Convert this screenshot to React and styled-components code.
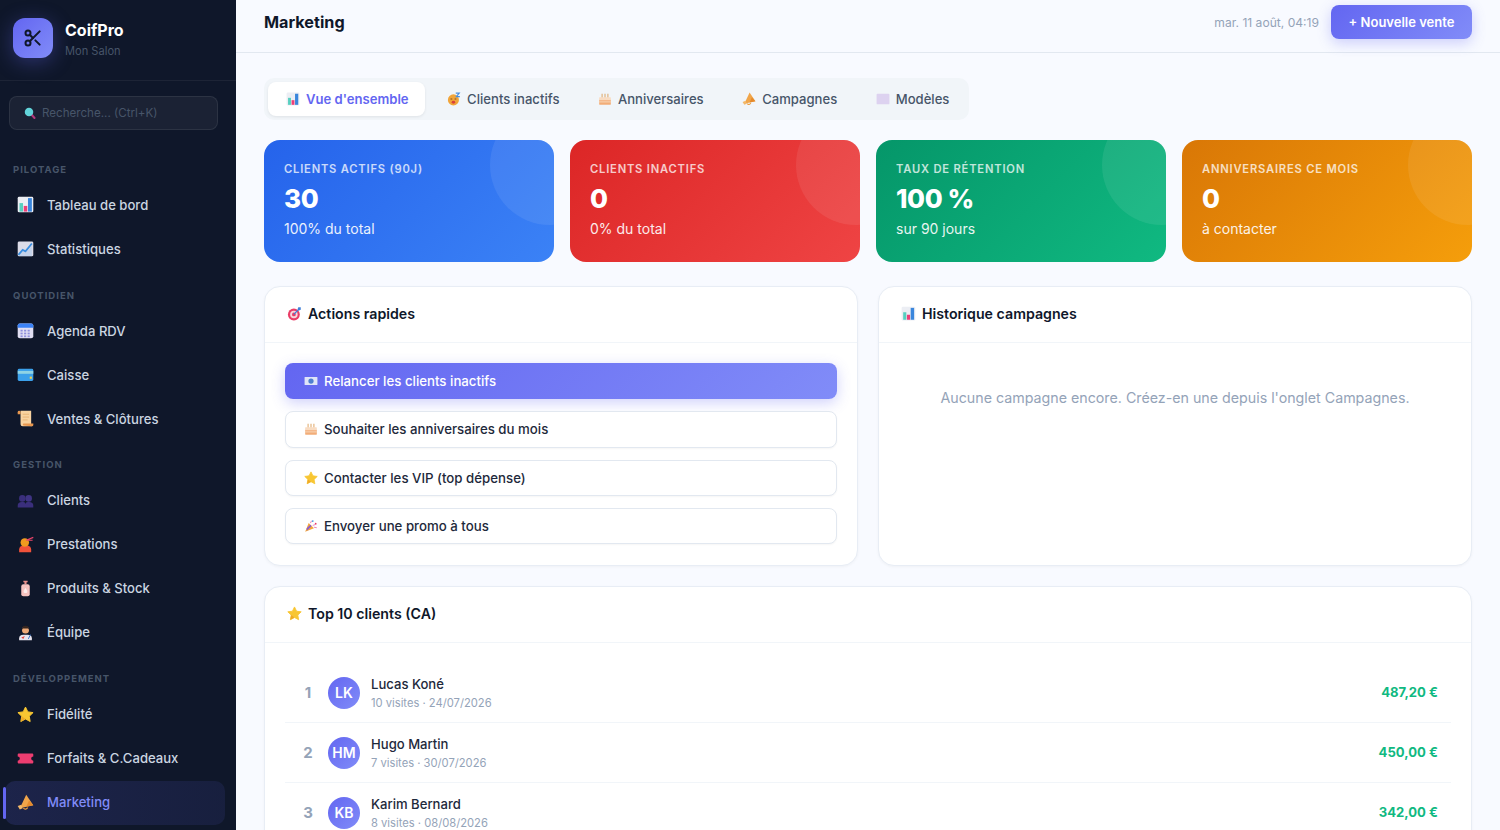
import React from "react";
import styled, { createGlobalStyle } from "styled-components";
import { Scissors } from "lucide-react";

const GlobalStyle = createGlobalStyle`
  * { box-sizing: border-box; }
  html, body { margin: 0; height: 100%; overflow: hidden; }
  body {
    font-family: Inter, "Noto Sans", sans-serif;
    background: #f8faff;
    color: #0f172a;
  }
`;

const Layout = styled.div`
  display: flex;
  width: 1500px;
  height: 830px;
  overflow: hidden;
`;

const Sidebar = styled.aside`
  width: 236px;
  flex-shrink: 0;
  height: 830px;
  overflow: hidden;
  background: #0f172a;
`;
const Brand = styled.div`
  height: 81px;
  display: flex;
  align-items: center;
  gap: 12px;
  padding: 0 13px 4px;
  border-bottom: 1px solid rgba(255, 255, 255, 0.06);
`;
const LogoBox = styled.div`
  width: 40px;
  height: 40px;
  border-radius: 12px;
  background: linear-gradient(135deg, #6366f1, #818cf8);
  box-shadow: 0 4px 20px rgba(99, 102, 241, 0.35);
  display: flex;
  align-items: center;
  justify-content: center;
  color: #0f172a;
`;
const BrandText = styled.div`
  margin-top: 3px;
`;
const BrandName = styled.div`
  font-size: 16px;
  font-weight: 700;
  line-height: 20px;
  color: #fff;
`;
const BrandSub = styled.div`
  font-size: 11.1px;
  line-height: 16px;
  margin-top: 3px;
  color: #475569;
`;
const SearchWrap = styled.div`
  padding: 15px 18px 16px 9px;
`;
const Search = styled.div`
  height: 34px;
  border-radius: 8px;
  background: rgba(255, 255, 255, 0.05);
  border: 1px solid rgba(255, 255, 255, 0.08);
  display: flex;
  align-items: center;
  gap: 6px;
  padding: 0 14px 1px;
  font-size: 11.6px;
  color: #475569;
`;
const EmojiSvg = styled.svg`
  width: ${(p) => p.$size}px;
  height: ${(p) => p.$size}px;
  flex-shrink: 0;
`;
const NavSection = styled.div`
  padding: 0 11px 0 5px;
`;
const NavLabel = styled.div`
  font-size: 9.5px;
  font-weight: 700;
  letter-spacing: 1px;
  line-height: 13px;
  padding: 16.8px 0 8px 8px;
  color: #475569;
  text-transform: uppercase;
`;
const NavItem = styled.div`
  position: relative;
  height: 44px;
  display: flex;
  align-items: center;
  gap: 13px;
  padding: 0 0 2px 12px;
  border-radius: 10px;
  font-size: 13.1px;
  font-weight: 500;
  color: ${(p) => (p.$active ? "#818cf8" : "#cbd5e1")};
  background: ${(p) =>
    p.$active
      ? "linear-gradient(90deg, rgba(99, 102, 241, 0.16), rgba(99, 102, 241, 0.1))"
      : "transparent"};
  ${(p) =>
    p.$active &&
    `&::before {
      content: "";
      position: absolute;
      left: -2px;
      top: 6px;
      bottom: 6px;
      width: 3px;
      border-radius: 2px;
      background: #6366f1;
    }`}
`;

const Main = styled.main`
  flex: 1;
  min-width: 0;
  height: 830px;
  overflow: hidden;
`;
const Header = styled.header`
  height: 53px;
  display: flex;
  align-items: center;
  justify-content: space-between;
  padding: 0 28px;
  border-bottom: 1px solid #e2e8f0;
`;
const PageTitle = styled.h1`
  margin: 0 0 8px;
  font-size: 16.2px;
  font-weight: 700;
`;
const HeaderRight = styled.div`
  display: flex;
  align-items: center;
  gap: 12px;
  margin-top: -8px;
`;
const DateText = styled.span`
  font-size: 12.1px;
  color: #94a3b8;
`;
const PrimaryButton = styled.button`
  height: 34px;
  width: 141px;
  border: none;
  border-radius: 8px;
  font: 600 13px Inter, sans-serif;
  color: #fff;
  background: linear-gradient(135deg, #6366f1, #818cf8);
  box-shadow: 0 4px 14px rgba(99, 102, 241, 0.3);
`;
const Content = styled.div`
  padding: 25px 28px;
  display: flex;
  flex-direction: column;
`;
const Tabs = styled.div`
  align-self: flex-start;
  display: flex;
  gap: 4.5px;
  padding: 4px;
  border-radius: 10px;
  background: #f1f5f9;
  margin-bottom: 20px;
`;
const Tab = styled.div`
  height: 34px;
  display: flex;
  align-items: center;
  gap: 6px;
  padding: 0 16px 0 18px;
  border-radius: 8px;
  font-size: 13.1px;
  font-weight: ${(p) => (p.$active ? 600 : 500)};
  color: ${(p) => (p.$active ? "#6366f1" : "#475569")};
  background: ${(p) => (p.$active ? "#fff" : "transparent")};
  box-shadow: ${(p) => (p.$active ? "0 1px 3px rgba(0,0,0,0.08)" : "none")};
`;
const KpiGrid = styled.div`
  display: grid;
  grid-template-columns: repeat(4, 1fr);
  gap: 16px;
  margin-bottom: 24px;
`;
const Kpi = styled.div`
  position: relative;
  overflow: hidden;
  height: 122px;
  padding: 22px 20px;
  border-radius: 16px;
  color: #fff;
  background: linear-gradient(135deg, ${(p) => p.$from}, ${(p) => p.$to});
  &::after {
    content: "";
    position: absolute;
    top: -35px;
    right: -56px;
    width: 120px;
    height: 120px;
    border-radius: 50%;
    background: rgba(255, 255, 255, 0.08);
  }
`;
const KpiLabel = styled.div`
  font-size: 11.2px;
  font-weight: 600;
  line-height: 14px;
  letter-spacing: 0.8px;
  text-transform: uppercase;
  opacity: 0.75;
`;
const KpiValue = styled.div`
  font-size: 26px;
  font-weight: 800;
  line-height: 34px;
  letter-spacing: -0.4px;
  margin-top: 6px;
`;
const KpiSub = styled.div`
  font-size: 14px;
  line-height: 18px;
  margin-top: 4px;
  opacity: 0.9;
`;
const TwoCols = styled.div`
  display: grid;
  grid-template-columns: 1fr 1fr;
  gap: 20px;
  margin-bottom: 20px;
`;
const Panel = styled.section`
  background: #fff;
  border: 1px solid #e8edf5;
  border-radius: 16px;
  box-shadow: 0 1px 3px rgba(0, 0, 0, 0.04);
`;
const PanelHeader = styled.div`
  height: 56px;
  display: flex;
  align-items: center;
  gap: 6px;
  padding: 0 22px 2px;
  border-bottom: 1px solid #f1f5f9;
  font-size: 14.2px;
  font-weight: 600;
`;
const PanelBody = styled.div`
  padding: 20px;
  display: flex;
  flex-direction: column;
  gap: 12px;
`;
const ActionButton = styled.button`
  height: 36.3px;
  display: flex;
  align-items: center;
  gap: 6px;
  padding: 0 18px;
  border-radius: 8px;
  font: 500 13.25px Inter, sans-serif;
  text-align: left;
  color: ${(p) => (p.$primary ? "#fff" : "#1e293b")};
  border: 1px solid ${(p) => (p.$primary ? "transparent" : "#e2e8f0")};
  background: ${(p) =>
    p.$primary ? "linear-gradient(135deg, #6366f1, #818cf8) border-box" : "#fff"};
  box-shadow: ${(p) =>
    p.$primary ? "0 4px 14px rgba(99, 102, 241, 0.3)" : "0 1px 2px rgba(0,0,0,0.04)"};
`;
const EmptyText = styled.div`
  padding: 46px 0 0;
  height: 222px;
  text-align: center;
  font-size: 14.24px;
  line-height: 18px;
  color: #94a3b8;
`;
const RowList = styled.div`
  padding: 20px;
`;
const ClientRow = styled.div`
  height: 60px;
  display: flex;
  align-items: center;
  padding: 0 13px 0 12px;
  border-bottom: 1px solid #f1f5f9;
`;
const Rank = styled.div`
  width: 22px;
  text-align: center;
  margin-right: 9px;
  font-size: 15px;
  font-weight: 700;
  color: #94a3b8;
`;
const Avatar = styled.div`
  width: 32px;
  height: 32px;
  border-radius: 50%;
  margin-right: 11px;
  display: flex;
  align-items: center;
  justify-content: center;
  font-size: 14px;
  font-weight: 600;
  color: #fff;
  background: linear-gradient(135deg, #6366f1, #818cf8);
`;
const ClientInfo = styled.div`
  flex: 1;
`;
const ClientName = styled.div`
  font-size: 13.1px;
  font-weight: 500;
  line-height: 18px;
  color: #1e293b;
`;
const ClientMeta = styled.div`
  font-size: 11.2px;
  line-height: 16px;
  margin-top: 2px;
  color: #94a3b8;
`;
const Amount = styled.div`
  font-size: 13.1px;
  font-weight: 700;
  padding-bottom: 1px;
  color: #10b981;
`;

// hand drawn versions of the emoji used in the app
const GLYPHS = {
  chart: (
    <>
      <rect x="1" y="1" width="22" height="22" rx="2" fill="#eceef4" />
      <rect x="3.5" y="10" width="5" height="12" fill="#57d0c0" />
      <rect x="9.5" y="14" width="5" height="8" fill="#ee3f78" />
      <rect x="15.5" y="3" width="5.5" height="19" fill="#3a86dc" />
    </>
  ),
  trend: (
    <>
      <rect x="1" y="2" width="22" height="21" rx="2" fill="#dcdce8" />
      <path d="M2 21 L8 14 L12 16 L21 5" fill="none" stroke="#3a8ee0" strokeWidth="2.6" />
      <path d="M2 23 L8 16 L12 18 L21 8 V23 Z" fill="#9fc4ea" opacity="0.4" />
    </>
  ),
  calendar: (
    <>
      <rect x="1" y="2" width="22" height="21" rx="3" fill="#e0def2" />
      <path d="M1 8 V5 a3 3 0 0 1 3-3 h16 a3 3 0 0 1 3 3 V8 Z" fill="#3b82f6" />
      {[5, 10, 15].flatMap((x) =>
        [11, 15, 19].map((y) => (
          <rect key={`${x}-${y}`} x={x} y={y} width="3" height="2.4" fill="#8d8edb" />
        ))
      )}
    </>
  ),
  card: (
    <>
      <rect x="1" y="4" width="22" height="17" rx="2" fill="#3ba0ea" />
      <rect x="1" y="7" width="22" height="4" fill="#8fd3e4" />
      <rect x="18" y="15" width="3" height="3" fill="#f3d44a" />
    </>
  ),
  scroll: (
    <>
      <path d="M5 1 H20 V21 a2 2 0 0 0 2 2 H8 a3 3 0 0 1-3-3 Z" fill="#f9d3a0" />
      <path d="M1 3 a2 2 0 0 1 4 0 V6 H1 Z" fill="#e8974f" />
      <path d="M9 22 a2 2 0 0 1 0-3 H23 V21 a2 2 0 0 1-2 2 Z" fill="#e8974f" />
      <path d="M8 6 H17 M8 10 H17 M8 14 H15" stroke="#e5b06e" strokeWidth="1.2" />
    </>
  ),
  people: (
    <>
      <circle cx="7.5" cy="9" r="4.6" fill="#3a2f7c" />
      <circle cx="16.5" cy="9" r="4.6" fill="#3f3484" />
      <path d="M1 22 v-3 a6 5 0 0 1 6-5 h2 a3 3 0 0 1 3 3 a3 3 0 0 1 3-3 h2 a6 5 0 0 1 6 5 v3 Z" fill="#3a2f7c" />
    </>
  ),
  hairdresser: (
    <>
      <path d="M3 23 v-4 a7 6 0 0 1 7-6 h3 a7 6 0 0 1 7 6 v4 Z" fill="#f0523a" />
      <circle cx="11" cy="9" r="6" fill="#f09b1e" />
      <path d="M13 6 L23 2 M13 6 L22 6" stroke="#e8456a" strokeWidth="1.7" />
    </>
  ),
  bottle: (
    <>
      <path d="M9 1 H15 V3 H13.5 V6 H10.5 V3 H9 Z" fill="#e88f8a" />
      <rect x="6" y="6" width="12" height="17" rx="3" fill="#f7c3c0" />
      <path d="M12 11 l2.5 4 a2.6 2.6 0 1 1-5 0 Z" fill="#fff" opacity="0.7" />
    </>
  ),
  artist: (
    <>
      <path d="M3 23 v-3 a6 5 0 0 1 6-5 h6 a6 5 0 0 1 6 5 v3 Z" fill="#e7e4ee" />
      <circle cx="12" cy="8.5" r="5" fill="#eeaa78" />
      <path d="M7 8 a5 5.5 0 0 1 10 0 l-1.5-1.5 h-7 Z" fill="#35251f" />
      <path d="M6 19 l5 -2 l-2 4 Z" fill="#e6453c" />
      <path d="M16 21 l3-6" stroke="#3f78c8" strokeWidth="1.4" />
    </>
  ),
  star: (
    <>
      <path
        d="M12 1.5 l3.3 6.8 l7.4 1 l-5.4 5.2 l1.3 7.4 L12 18.4 l-6.6 3.5 l1.3-7.4 L1.3 9.3 l7.4-1 Z"
        fill="#f8c632"
        stroke="#f8c632"
        strokeWidth="1.4"
        strokeLinejoin="round"
      />
      <path d="M12 18.4 l-6.6 3.5 l1.3-7.4 Z" fill="#efa928" />
    </>
  ),
  ticket: (
    <path
      d="M2 5 H22 a1.5 1.5 0 0 1 1 1.5 v2.5 a3 3 0 0 0 0 6 v2.5 a1.5 1.5 0 0 1-1 1.5 H2 a1.5 1.5 0 0 1-1-1.5 V15 a3 3 0 0 0 0-6 V6.5 A1.5 1.5 0 0 1 2 5 Z"
      fill="#ec3d70"
    />
  ),
  megaphone: (
    <>
      <path d="M13 1 L23 16 L4 20 Z" fill="#f0a54a" />
      <path d="M17 9 L23 16 L13 18 Z" fill="#e58a2c" />
      <path d="M1 17 l5-2 l2 5 l-4 2 Z" fill="#f3b869" />
      <path d="M9 20 a3.5 3.5 0 0 0 6-1" fill="none" stroke="#e89a3c" strokeWidth="1.8" />
    </>
  ),
  search: (
    <>
      <path d="M14 14 L21 22" stroke="#b23a7c" strokeWidth="4" strokeLinecap="round" />
      <circle cx="10" cy="10" r="8.5" fill="#62d4da" />
    </>
  ),
  sleepy: (
    <>
      <circle cx="11" cy="13.5" r="9.5" fill="#f1a53a" />
      <path d="M6 12 h3 M13 12 h3" stroke="#6b3a1a" strokeWidth="1.4" />
      <ellipse cx="11" cy="17.5" rx="3" ry="2.5" fill="#d9403c" />
      <path d="M15 2 h6 l-5 6 h6" fill="none" stroke="#4a8fe0" strokeWidth="2" />
    </>
  ),
  cake: (
    <>
      <rect x="2" y="13" width="20" height="9" rx="1.5" fill="#f2ad78" />
      <path d="M3 9 h18 a1 1 0 0 1 1 1 v4 H2 v-4 a1 1 0 0 1 1-1 Z" fill="#f9dcc2" />
      <path d="M2 17 h20" stroke="#f9dcc2" strokeWidth="1.6" />
      <path d="M7 3 v6 M12 3 v6 M17 3 v6" stroke="#dd9f58" strokeWidth="1.6" />
    </>
  ),
  template: <rect x="1" y="3" width="22" height="18" rx="1.5" fill="#ddd2f0" />,
  target: (
    <>
      <circle cx="11" cy="13.5" r="9.5" fill="#ea3c66" />
      <circle cx="11" cy="13.5" r="6" fill="#f6d6dc" />
      <circle cx="11" cy="13.5" r="3" fill="#ea3c66" />
      <path d="M11 13.5 L20 4" stroke="#3f7fd8" strokeWidth="1.8" />
      <path d="M18 2 h4 v4 l-3 1 l-2-2 Z" fill="#3f7fd8" />
    </>
  ),
  banknote: (
    <>
      <rect x="1" y="5" width="22" height="14" rx="1" fill="#dfe4f8" />
      <circle cx="12" cy="12" r="4.5" fill="#4f7fd0" />
    </>
  ),
  party: (
    <>
      <path d="M2 22 L8 7 L17 16 Z" fill="#f2a63b" />
      <path d="M4.5 16 L11 10 L13 12 L5 20 Z" fill="#8a5bd0" />
      <circle cx="15" cy="3.5" r="1.5" fill="#3f9be0" />
      <circle cx="20" cy="8" r="1.5" fill="#ea3c66" />
      <path d="M11 7 l2-4 M15 11 l6-2 M17 14 l5 1" stroke="#ea7ab0" strokeWidth="1.5" />
    </>
  ),
};

const Emoji = ({ name, size }) => (
  <EmojiSvg viewBox="0 0 24 24" $size={size}>
    {GLYPHS[name]}
  </EmojiSvg>
);

const NAV = [
  { label: "Pilotage", items: [["chart", "Tableau de bord"], ["trend", "Statistiques"]] },
  { label: "Quotidien", items: [["calendar", "Agenda RDV"], ["card", "Caisse"], ["scroll", "Ventes & Clôtures"]] },
  { label: "Gestion", items: [["people", "Clients"], ["hairdresser", "Prestations"], ["bottle", "Produits & Stock"], ["artist", "Équipe"]] },
  { label: "Développement", items: [["star", "Fidélité"], ["ticket", "Forfaits & C.Cadeaux"], ["megaphone", "Marketing"]] },
];
const TABS = [["chart", "Vue d'ensemble"], ["sleepy", "Clients inactifs"], ["cake", "Anniversaires"], ["megaphone", "Campagnes"], ["template", "Modèles"]];
const KPIS = [
  { label: "Clients actifs (90j)", value: "30", sub: "100% du total", from: "#2563eb", to: "#3b82f6" },
  { label: "Clients inactifs", value: "0", sub: "0% du total", from: "#dc2626", to: "#ef4444" },
  { label: "Taux de rétention", value: "100 %", sub: "sur 90 jours", from: "#059669", to: "#10b981" },
  { label: "Anniversaires ce mois", value: "0", sub: "à contacter", from: "#d97706", to: "#f59e0b" },
];
const ACTIONS = [["banknote", "Relancer les clients inactifs"], ["cake", "Souhaiter les anniversaires du mois"], ["star", "Contacter les VIP (top dépense)"], ["party", "Envoyer une promo à tous"]];
const CLIENTS = [
  ["LK", "Lucas Koné", "10 visites · 24/07/2026", "487,20 €"],
  ["HM", "Hugo Martin", "7 visites · 30/07/2026", "450,00 €"],
  ["KB", "Karim Bernard", "8 visites · 08/08/2026", "342,00 €"],
];

export default function App() {
  return (
    <Layout>
      <GlobalStyle />
      <Sidebar>
        <Brand>
          <LogoBox>
            <Scissors size={20} strokeWidth={2.4} />
          </LogoBox>
          <BrandText>
            <BrandName>CoifPro</BrandName>
            <BrandSub>Mon Salon</BrandSub>
          </BrandText>
        </Brand>
        <SearchWrap>
          <Search>
            <Emoji name="search" size={12} />
            Recherche... (Ctrl+K)
          </Search>
        </SearchWrap>
        {NAV.map((section) => (
          <NavSection key={section.label}>
            <NavLabel>{section.label}</NavLabel>
            {section.items.map(([icon, text]) => (
              <NavItem key={text} $active={text === "Marketing"}>
                <Emoji name={icon} size={17} />
                {text}
              </NavItem>
            ))}
          </NavSection>
        ))}
      </Sidebar>
      <Main>
        <Header>
          <PageTitle>Marketing</PageTitle>
          <HeaderRight>
            <DateText>mar. 11 août, 04:19</DateText>
            <PrimaryButton>+ Nouvelle vente</PrimaryButton>
          </HeaderRight>
        </Header>
        <Content>
          <Tabs>
            {TABS.map(([icon, text], i) => (
              <Tab key={text} $active={i === 0}>
                <Emoji name={icon} size={14} />
                {text}
              </Tab>
            ))}
          </Tabs>
          <KpiGrid>
            {KPIS.map((k) => (
              <Kpi key={k.label} $from={k.from} $to={k.to}>
                <KpiLabel>{k.label}</KpiLabel>
                <KpiValue>{k.value}</KpiValue>
                <KpiSub>{k.sub}</KpiSub>
              </Kpi>
            ))}
          </KpiGrid>
          <TwoCols>
            <Panel>
              <PanelHeader>
                <Emoji name="target" size={15} />
                Actions rapides
              </PanelHeader>
              <PanelBody>
                {ACTIONS.map(([icon, text], i) => (
                  <ActionButton key={text} $primary={i === 0}>
                    <Emoji name={icon} size={14} />
                    {text}
                  </ActionButton>
                ))}
              </PanelBody>
            </Panel>
            <Panel>
              <PanelHeader>
                <Emoji name="chart" size={15} />
                Historique campagnes
              </PanelHeader>
              <EmptyText>Aucune campagne encore. Créez-en une depuis l'onglet Campagnes.</EmptyText>
            </Panel>
          </TwoCols>
          <Panel>
            <PanelHeader>
              <Emoji name="star" size={15} />
              Top 10 clients (CA)
            </PanelHeader>
            <RowList>
              {CLIENTS.map(([initials, name, meta, amount], i) => (
                <ClientRow key={name}>
                  <Rank>{i + 1}</Rank>
                  <Avatar>{initials}</Avatar>
                  <ClientInfo>
                    <ClientName>{name}</ClientName>
                    <ClientMeta>{meta}</ClientMeta>
                  </ClientInfo>
                  <Amount>{amount}</Amount>
                </ClientRow>
              ))}
            </RowList>
          </Panel>
        </Content>
      </Main>
    </Layout>
  );
}
